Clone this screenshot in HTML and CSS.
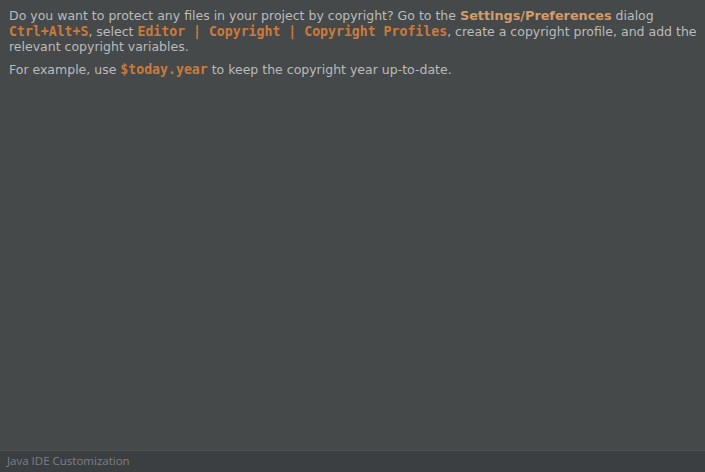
FILE: index.html
```html
<!DOCTYPE html>
<html>
<head>
<meta charset="utf-8">
<link rel="stylesheet" href="styles.css">
</head>
<body>
<div class="page">
  <main class="content">
    <p class="para">Do you want to protect any files in your project by copyright? Go to the <b class="ui">Settings/Preferences</b> dialog <code class="key">Ctrl+Alt+S</code>, select <code class="key">Editor | Copyright | Copyright Profiles</code>, create a copyright profile, and add the relevant copyright variables.</p>
    <p class="para">For example, use <code class="key">$today.year</code> to keep the copyright year up-to-date.</p>
  </main>
  <footer class="footer">Java IDE Customization</footer>
</div>
</body>
</html>
```
FILE: styles.css
```css
html, body {
  margin: 0;
  padding: 0;
  height: 100%;
}
body {
  background: #45494a;
}
.page {
  display: flex;
  flex-direction: column;
  height: 100vh;
}
.content {
  flex: 1;
  padding: 8px 2px 0 9px;
}
.para {
  margin: 0 0 7px 0;
  font-family: "DejaVu Sans", Verdana, sans-serif;
  font-size: 12.5px;
  line-height: 15.5px;
  color: #bbbbbb;
}
.ui {
  font-weight: bold;
  color: #d59b68;
  font-size: 12.8px;
}
.key {
  font-family: "DejaVu Sans Mono", monospace;
  font-weight: bold;
  font-size: 13.2px;
  line-height: 15px;
  color: #cc7a3c;
}
.footer {
  height: 21px;
  border-top: 1px solid #4f5253;
  background: #3c3f41;
  color: #7d8083;
  font-family: "Open Sans", "Noto Sans", sans-serif;
  font-size: 11.5px;
  line-height: 19px;
  padding-left: 7px;
}
```
